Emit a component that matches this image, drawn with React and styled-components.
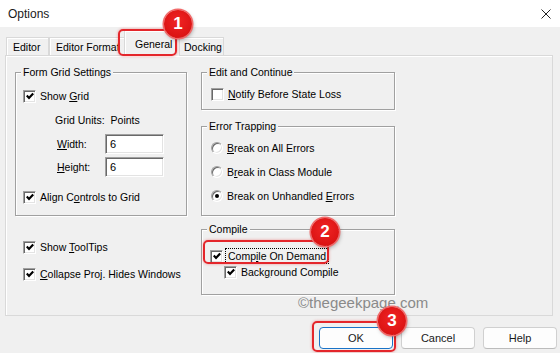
import React from 'react';
import styled, { createGlobalStyle } from 'styled-components';

const GlobalStyle = createGlobalStyle`
	html, body {
		margin: 0;
		padding: 0;
		background: #f0f0f0;
	}
	* {
		box-sizing: border-box;
	}
`;

const Window = styled.div`
	position: relative;
	width: 560px;
	height: 353px;
	overflow: hidden;
	background: #f0f0f0;
	display: flex;
	flex-direction: column;
	font-family: 'Liberation Sans', Arial, sans-serif;
	font-size: 10.5px;
	color: #000;
`;

const TitleBar = styled.div`
	height: 27px;
	flex: none;
	background: #fff;
	display: flex;
	align-items: center;
	justify-content: space-between;
	padding: 0 9px 0 8px;
	font-size: 12px;
	color: #1a1a1a;
`;

const Body = styled.div`
	display: flex;
	flex-direction: column;
	padding: 3px 3px 0 5px;
`;

const TabStrip = styled.div`
	position: relative;
	z-index: 2;
	height: 25px;
	display: flex;
	align-items: flex-end;
	padding-left: 1px;
`;

const Tab = styled.div`
	position: relative;
	flex: none;
	width: ${({ w }) => w}px;
	height: ${({ active }) => (active ? 26 : 18)}px;
	margin: ${({ active }) => (active ? '0 -2px -1px -3px' : '0')};
	z-index: ${({ active }) => (active ? 2 : 1)};
	padding-left: ${({ pl }) => pl || 6}px;
	display: flex;
	align-items: center;
	white-space: nowrap;
	overflow: hidden;
	background: #f0f0f0;
	border: 1px solid #d9d9d9;
	border-bottom: none;
	box-shadow: inset 1px 1px 0 #fff;
`;

const Panel = styled.div`
	width: 548px;
	height: 261px;
	border: 1px solid #d9d9d9;
	box-shadow: inset 1px 1px 0 #fff;
	display: flex;
	gap: 14px;
	padding: 16px 0 0 9px;
`;

const Column = styled.div`
	width: ${({ w }) => w}px;
	display: flex;
	flex-direction: column;
`;

const GroupBox = styled.div`
	position: relative;
	height: ${({ h }) => h}px;
	margin-top: ${({ mt }) => mt || 0}px;
	padding: ${({ pad }) => pad};
	border: 1px solid #a0a0a0;
	box-shadow: 1px 1px 0 #fff, inset 1px 1px 0 #fff;
	display: flex;
	flex-direction: column;
`;

const Legend = styled.span`
	position: absolute;
	top: -8px;
	left: 5px;
	padding: 0 2px;
	line-height: 14px;
	background: #f0f0f0;
`;

const Row = styled.div`
	display: flex;
	align-items: center;
	height: ${({ h }) => h || 16}px;
	margin-top: ${({ mt }) => mt || 0}px;
	padding-left: ${({ pl }) => pl || 0}px;
	gap: ${({ gap }) => (gap === undefined ? 4 : gap)}px;
	white-space: nowrap;
`;

const CheckBox = styled.span`
	flex: none;
	width: 13px;
	height: 13px;
	background: #fff;
	border: 1px solid;
	border-color: #a0a0a0 #fff #fff #a0a0a0;
	box-shadow: inset 1px 1px 0 #696969, inset -1px -1px 0 #e3e3e3;
	display: flex;
	align-items: center;
	justify-content: center;
`;

const RadioDot = styled.span`
	flex: none;
	width: 12px;
	height: 12px;
	border-radius: 50%;
	background: #fff;
	border: 1px solid;
	border-color: #a0a0a0 #fff #fff #a0a0a0;
	box-shadow: inset 1px 1px 0 #696969, inset -1px -1px 0 #e3e3e3;
	display: flex;
	align-items: center;
	justify-content: center;
	&::after {
		content: '';
		width: 4px;
		height: 4px;
		border-radius: 50%;
		background: ${({ on }) => (on ? '#000' : 'transparent')};
	}
`;

const Focus = styled.span`
	outline: 1px dotted #000;
	outline-offset: 1px;
	padding: 0 1px;
`;

const LabelCell = styled.span`
	width: ${({ w }) => w}px;
	flex: none;
`;

const TextBox = styled.div`
	width: 59px;
	height: 20px;
	background: #fff;
	border: 1px solid;
	border-color: #a0a0a0 #fff #fff #a0a0a0;
	box-shadow: inset 1px 1px 0 #696969, inset -1px -1px 0 #e3e3e3;
	padding: 0 4px;
	display: flex;
	align-items: center;
	font-size: 11px;
`;

const ButtonRow = styled.div`
	display: flex;
	justify-content: flex-end;
	gap: 8px;
	margin-top: 11px;
`;

const Button = styled.div`
	width: 74px;
	height: 22px;
	display: flex;
	align-items: center;
	justify-content: center;
	font-size: 11px;
	background: #fdfdfd;
	border: 1px solid ${({ primary }) => (primary ? '#1a73c7' : '#d0d0d0')};
	border-bottom-color: ${({ primary }) => (primary ? '#1a73c7' : '#bcbcbc')};
	border-radius: 4px;
	color: #1a1a1a;
`;

const Highlight = styled.div`
	position: absolute;
	z-index: 5;
	border: 2px solid #e4262b;
	border-radius: 5px;
	box-shadow: 0 0 3px rgba(228, 38, 43, 0.45);
	pointer-events: none;
`;

const Badge = styled.div`
	position: absolute;
	z-index: 6;
	width: 28px;
	height: 28px;
	border-radius: 50%;
	background: radial-gradient(circle at 50% 40%, #f02424 0%, #dc1414 70%);
	box-shadow: 0 0 0 1.5px #f26a6a, 1px 2px 4px rgba(0, 0, 0, 0.35);
	color: #fff;
	font-size: 17px;
	font-weight: 700;
	display: flex;
	align-items: center;
	justify-content: center;
`;

const Watermark = styled.div`
	position: absolute;
	z-index: 4;
	left: 298px;
	top: 294px;
	font-size: 15px;
	line-height: 17px;
	color: #8a8a8a;
`;

const Tick = () => (
	<svg width="8" height="8" viewBox="0 0 8 8">
		<polyline points="0.8,3.6 3,5.9 7.2,1.4" fill="none" stroke="#000" strokeWidth="2.2" />
	</svg>
);

const CloseIcon = () => (
	<svg width="10" height="10" viewBox="0 0 10 10">
		<path d="M0.5 0.5 L9.5 9.5 M9.5 0.5 L0.5 9.5" stroke="#222" strokeWidth="1" fill="none" />
	</svg>
);

const Check = ({ on, children, focus, ...rest }) => (
	<Row {...rest}>
		<CheckBox>{on && <Tick />}</CheckBox>
		{focus ? <Focus>{children}</Focus> : <span>{children}</span>}
	</Row>
);

const Radio = ({ on, children, ...rest }) => (
	<Row {...rest}>
		<RadioDot on={on} />
		<span>{children}</span>
	</Row>
);

const overlay = (x, y, w, h) => ({ left: x, top: y, width: w, height: h });

export default function App() {
	return (
		<>
			<GlobalStyle />
			<Window>
				<TitleBar>
					<span>Options</span>
					<CloseIcon />
				</TitleBar>
				<Body>
					<TabStrip>
						<Tab w={43}>Editor</Tab>
						<Tab w={78}>Editor Format</Tab>
						<Tab w={56} pl={10} active>
							General
						</Tab>
						<Tab w={46} pl={5}>
							Docking
						</Tab>
					</TabStrip>
					<Panel>
						<Column w={172}>
							<GroupBox h={144} pad="15px 0 0 7px">
								<Legend>Form Grid Settings</Legend>
								<Check on>
									Show <u>G</u>rid
								</Check>
								<Row mt={8} pl={32} gap={6}>
									<span>Grid Units:</span>
									<span>Points</span>
								</Row>
								<Row h={20} mt={6} pl={34} gap={0}>
									<LabelCell w={48}>
										<u>W</u>idth:
									</LabelCell>
									<TextBox>6</TextBox>
								</Row>
								<Row h={20} mt={3} pl={34} gap={0}>
									<LabelCell w={48}>
										<u>H</u>eight:
									</LabelCell>
									<TextBox>6</TextBox>
								</Row>
								<Check on mt={12}>
									Align C<u>o</u>ntrols to Grid
								</Check>
							</GroupBox>
							<Check on mt={23} pl={8}>
								Show <u>T</u>oolTips
							</Check>
							<Check on mt={11} pl={8}>
								<u>C</u>ollapse Proj. Hides Windows
							</Check>
						</Column>
						<Column w={194}>
							<GroupBox h={38} pad="13px 0 0 9px">
								<Legend>Edit and Continue</Legend>
								<Check>
									<u>N</u>otify Before State Loss
								</Check>
							</GroupBox>
							<GroupBox h={90} mt={16} pad="13px 0 0 9px">
								<Legend>Error Trapping</Legend>
								<Radio>
									<u>B</u>reak on All Errors
								</Radio>
								<Radio mt={8}>
									B<u>r</u>eak in Class Module
								</Radio>
								<Radio on mt={8}>
									Break on Unhandled <u>E</u>rrors
								</Radio>
							</GroupBox>
							<GroupBox h={66} mt={13} pad="18px 0 0 8px">
								<Legend>Compile</Legend>
								<Check on focus>
									Comp<u>i</u>le On Demand
								</Check>
								<Check on pl={14}>
									Back<u>g</u>round Compile
								</Check>
							</GroupBox>
						</Column>
					</Panel>
					<ButtonRow>
						<Button primary>OK</Button>
						<Button>Cancel</Button>
						<Button>Help</Button>
					</ButtonRow>
				</Body>

				<Watermark>©thegeekpage.com</Watermark>
				<Highlight style={overlay(118, 29, 59, 27)} />
				<Badge style={overlay(164, 10, 28, 28)}>1</Badge>
				<Highlight style={overlay(203, 240, 126, 24)} />
				<Badge style={overlay(311, 218, 28, 28)}>2</Badge>
				<Highlight style={overlay(312, 321, 84, 31)} />
				<Badge style={overlay(378, 307, 28, 28)}>3</Badge>
			</Window>
		</>
	);
}
